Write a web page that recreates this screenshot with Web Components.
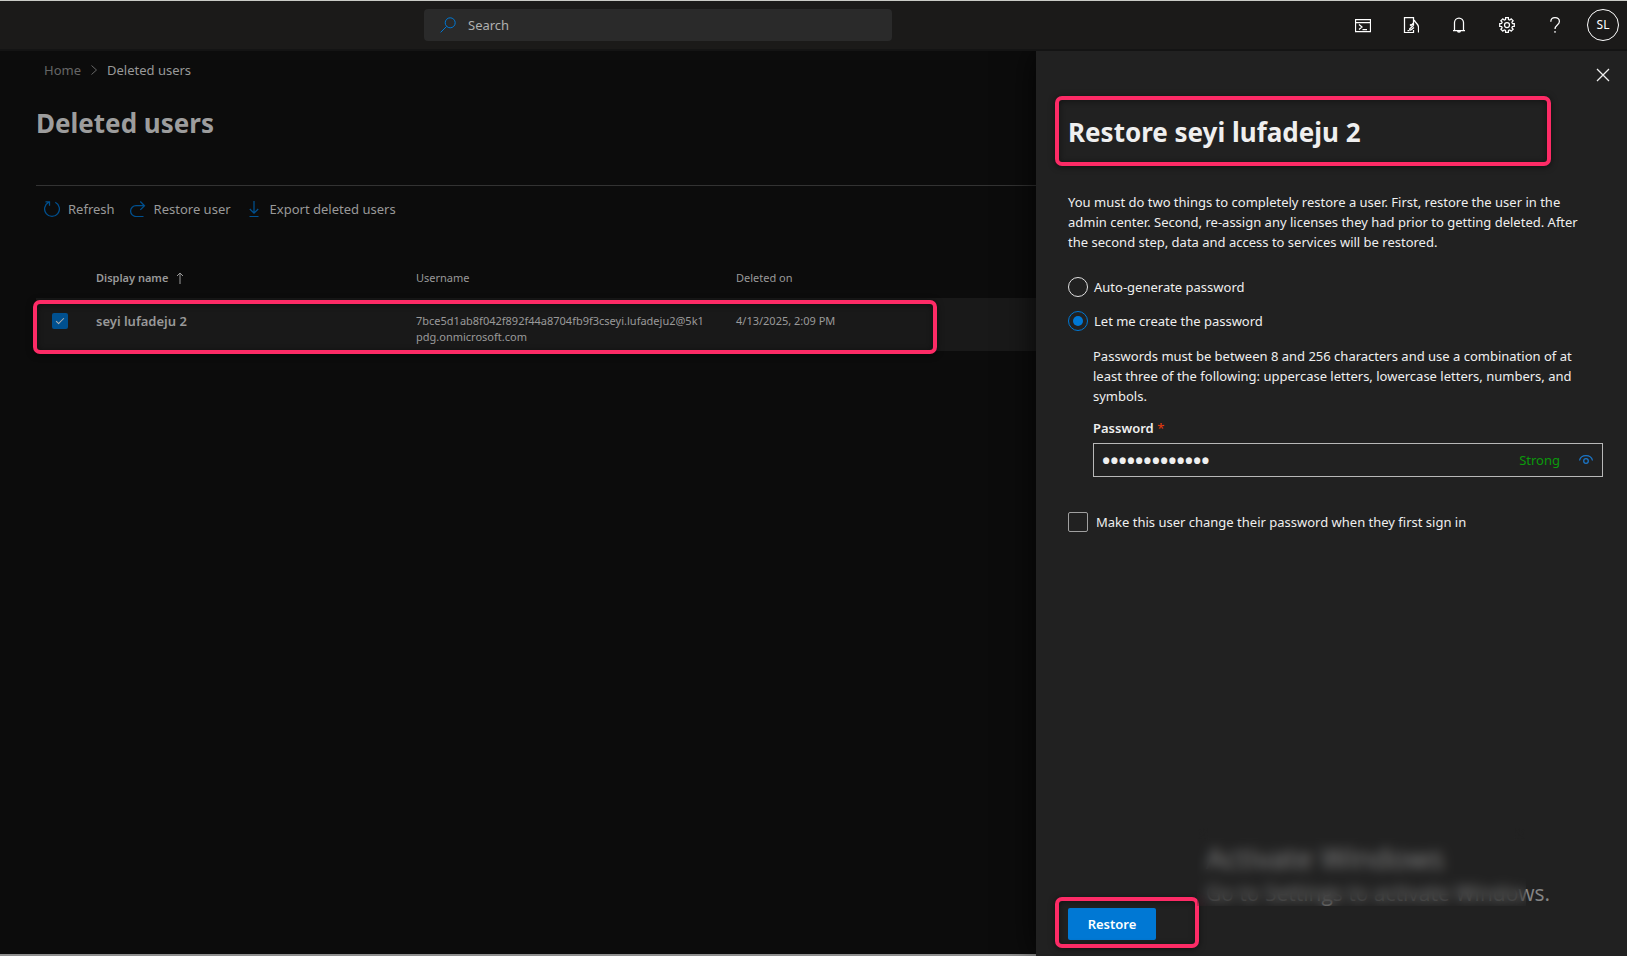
<!DOCTYPE html>
<html lang="en">
<head>
<meta charset="utf-8">
<title>Deleted users</title>
<style>
html, body { margin: 0; height: 100%; background: #0c0c0c; }
body { font: 13px/20px "Noto Sans", "Open Sans", sans-serif; color: #efefef; }
</style>
</head>
<body>
<admin-shell>
  <admin-header slot="header"></admin-header>
  <users-page slot="main"></users-page>
  <restore-panel slot="panel"></restore-panel>
</admin-shell>

<script>
function define(name, markup, setup) {
  const template = document.createElement('template');
  template.innerHTML = markup;
  customElements.define(name, class extends HTMLElement {
    constructor() {
      super();
      this.attachShadow({ mode: 'open' }).append(template.content.cloneNode(true));
    }
    connectedCallback() { if (setup) setup(this, this.shadowRoot); }
  });
}

const gear = (() => {
  const p = [];
  const at = (r, a) => p.push((8 + r * Math.cos(a)).toFixed(2) + ' ' + (8 + r * Math.sin(a)).toFixed(2));
  for (let i = 0; i < 8; i++) {
    const a = i * Math.PI / 4;
    at(5.6, a - .27); at(7.4, a - .19); at(7.4, a + .19); at(5.6, a + .27);
  }
  return 'M' + p.join('L') + 'Z';
})();

const icons = {
  search: '<circle cx="10.2" cy="5.8" r="5"/><path d="M6.6 9.4 .6 15.4"/>',
  shell: '<path d="M.5 2.5h15v12H.5zM.5 5.5h15M4 7.5l3 2.5-3 2.5M7.5 12.5H12"/>',
  touch: '<path d="M10.500 4V.500h-9v15h9V13M4.500 13.500h2"/><path d="M10.500 8.500V4.200c0-1 1.300-1 1.300 0l2.700 3.300c.8 1 1 1.500 1 3v5M10.500 6 8 8.500l-1-1M10.500 8.500l-3.500 3c-.8.800.2 2 1.200 1.200l2.800-2.200"/>',
  bell: '<path d="M3.500 13V5.500a4.500 4.500 0 0 1 9 0V13M2 13.500h12M6.500 13.500a1.500 1.700 0 0 0 3 0"/>',
  gear: '<path d="' + gear + '"/><circle cx="8" cy="8" r="2.500"/>',
  help: '<path d="M3.800 4.800C3.800 2.200 5.500.700 8 .700s4.400 1.500 4.400 3.900c0 3.400-4.400 3.500-4.400 7.400"/><path d="M8 14v1.800"/>',
  close: '<path d="M2 2l12 12M14 2 2 14"/>',
  chevron: '<path d="M5.500 3.500 10.500 8l-5 4.500"/>',
  refresh: '<path d="M4.700 1.300A7.400 7.400 0 1 0 11.300 1.300M1.500.800h4v4"/>',
  redo: '<path d="M13.500 15.500H6A5.300 5.300 0 0 1 6 4.700h8.500M10.300.500l4.200 4.200-4.200 4.200"/>',
  download: '<path d="M8 0v12M3.800 8 8 12.200 12.200 8M3.500 15.500h9"/>',
  up: '<path d="M8 14V3M5 6l3-3 3 3"/>',
  eye: '<path d="M1.500 8.500C2.200 5 5 3.500 8 3.500s5.800 1.500 6.500 5"/><circle cx="8" cy="9" r="2.300"/>'
};
define('ui-icon', `
  <style>
    :host { display: inline-block; flex: none; width: 16px; height: 16px; }
    svg { display: block; width: 100%; height: 100%; fill: none; stroke: currentColor; stroke-width: var(--icon-stroke, 1); }
  </style>
  <svg viewBox="0 0 16 16" aria-hidden="true"></svg>`,
  (host, root) => { root.querySelector('svg').innerHTML = icons[host.getAttribute('name')]; });

define('marked-area', `
  <style>
    :host { display: block; position: relative; }
    .frame {
      position: absolute; inset: var(--mark-inset, 0); pointer-events: none;
      border: 4px solid #fd2b66; border-radius: 7px;
      box-shadow: 0 1px 6px rgba(0,0,0,.55), inset 0 1px 6px rgba(0,0,0,.45);
    }
  </style>
  <slot></slot><div class="frame"></div>`);

define('admin-shell', `
  <style>
    :host { display: flex; flex-direction: column; min-height: 100vh; }
    .body { flex: 1; display: flex; align-items: stretch; }
    .main { flex: 1; min-width: 0; display: flex; flex-direction: column; border-bottom: 2px solid #8f8f8f; }
    .panel { flex: 0 1 591px; display: flex; position: relative; box-shadow: 0 0 32px rgba(0,0,0,.8); }
    ::slotted(*) { flex: 1; }
    ::slotted([slot=header]) { flex: none; }
  </style>
  <slot name="header"></slot>
  <div class="body">
    <div class="main"><slot name="main"></slot></div>
    <div class="panel"><slot name="panel"></slot></div>
  </div>`);

define('admin-header', `
  <style>
    :host {
      display: flex; align-items: center; height: 48px; position: relative; z-index: 1;
      background: #1b1a19; border-top: 1px solid #cacbc6; border-bottom: 2px solid #141414;
    }
    .lead { flex: 0 1 424px; }
    .search {
      flex: 0 1 468px; height: 32px; display: flex; align-items: center; gap: 12px;
      box-sizing: border-box; padding: 0 16px; border-radius: 4px; background: #2a2a2a; color: #0078d4;
    }
    input {
      flex: 1; min-width: 0; padding: 0; border: 0; outline: 0; background: none; font: inherit; color: #b0b0b0;
    }
    input::placeholder { color: #b0b0b0; opacity: 1; }
    nav { margin-left: auto; display: flex; }
    button {
      width: 48px; height: 48px; padding: 0; border: 0; background: none; color: #fff;
      font: inherit; display: grid; place-items: center;
    }
    nav ui-icon { --icon-stroke: 1.25; }
    .avatar {
      box-sizing: border-box; width: 32px; height: 32px; border: 1px solid #fff; border-radius: 50%;
      display: grid; place-items: center; font-size: 12px;
    }
  </style>
  <div class="lead"></div>
  <label class="search"><ui-icon name="search"></ui-icon><input type="search" placeholder="Search" aria-label="Search"></label>
  <nav aria-label="Tools">
    <button aria-label="Cloud shell"><ui-icon name="shell"></ui-icon></button>
    <button aria-label="Mobile app"><ui-icon name="touch"></ui-icon></button>
    <button aria-label="Notifications"><ui-icon name="bell"></ui-icon></button>
    <button aria-label="Settings"><ui-icon name="gear"></ui-icon></button>
    <button aria-label="Help"><ui-icon name="help"></ui-icon></button>
    <button aria-label="Account"><span class="avatar">SL</span></button>
  </nav>`);

define('bread-crumb', `
  <style>
    :host { display: block; padding-left: 8px; color: #999; }
    nav { display: flex; align-items: center; gap: 5px; }
    a { color: #666; text-decoration: none; }
    ui-icon { color: #666; }
  </style>
  <nav aria-label="Breadcrumb"><a href="#home">Home</a><ui-icon name="chevron"></ui-icon><span aria-current="page">Deleted users</span></nav>`);

define('command-button', `
  <style>
    :host { display: block; }
    button {
      height: 36px; padding: 0; border: 0; background: none; font: inherit; color: #999;
      display: flex; align-items: center; gap: 8px;
    }
    ui-icon { color: #00508f; --icon-stroke: 1.25; }
  </style>
  <button><ui-icon></ui-icon><slot></slot></button>`,
  (host, root) => {
    const icon = document.createElement('ui-icon');
    icon.setAttribute('name', host.getAttribute('icon'));
    root.querySelector('ui-icon').replaceWith(icon);
  });

define('users-table', `
  <style>
    :host { display: block; font-size: 11px; line-height: 16px; color: #999; }
    table { width: 100%; border-collapse: collapse; table-layout: fixed; }
    th, td { padding: 0; text-align: left; font-weight: 400; }
    thead th { height: 40px; }
    .check { width: 60px; }
    .wide { width: 320px; }
    .sorted { font-weight: 600; }
    .sorted span { display: flex; align-items: center; gap: 4px; }
    tbody tr { background: #191919; }
    tbody td, tbody th { height: 38px; padding-top: 15px; vertical-align: top; }
    tbody th { font-size: 13px; font-weight: 600; }
    tbody td.user { padding-right: 30px; overflow-wrap: anywhere; }
    input {
      appearance: none; display: block; width: 16px; height: 16px; margin: 0 0 0 16px; border-radius: 2px;
      background: #00508f; position: relative;
    }
    input::after {
      content: ""; position: absolute; left: 4px; top: 5px; width: 7px; height: 3px;
      border: solid #b0b0b0; border-width: 0 0 1px 1px; transform: rotate(-45deg);
    }
  </style>
  <table>
    <thead><tr>
      <th class="check"></th>
      <th class="wide sorted" aria-sort="ascending"><span>Display name<ui-icon name="up"></ui-icon></span></th>
      <th class="wide">Username</th>
      <th>Deleted on</th>
    </tr></thead>
    <tbody><tr>
      <td><input type="checkbox" checked aria-label="Select seyi lufadeju 2"></td>
      <th>seyi lufadeju 2</th>
      <td class="user">7bce5d1ab8f042f892f44a8704fb9f3cseyi.lufadeju2@5k1pdg.onmicrosoft.com</td>
      <td>4/13/2025, 2:09 PM</td>
    </tr></tbody>
  </table>`);

define('users-page', `
  <style>
    :host { display: block; padding: 9px 0 0 36px; }
    h1 { margin: 25px 0 44px; font-size: 26px; line-height: 36px; font-weight: 700; color: #9d9d9d; }
    .commands { display: flex; gap: 15px; padding: 5px 0 0 8px; margin-bottom: 31px; border-top: 1px solid #333; }
    marked-area { --mark-inset: 42px 99px -3px -3px; }
  </style>
  <bread-crumb></bread-crumb>
  <h1>Deleted users</h1>
  <div class="commands">
    <command-button icon="refresh">Refresh</command-button>
    <command-button icon="redo">Restore user</command-button>
    <command-button icon="download">Export deleted users</command-button>
  </div>
  <marked-area><users-table></users-table></marked-area>`);

define('windows-watermark', `
  <style>
    :host { display: block; position: relative; font-family: "Open Sans", sans-serif; color: #858585; white-space: nowrap; }
    p { margin: 0; font-size: 21px; line-height: 30px; }
    .title { font-size: 29px; line-height: 40px; }
    .blur { position: absolute; inset: -10px 24px 2px -9px; backdrop-filter: blur(6px); }
  </style>
  <p class="title">Activate Windows</p>
  <p>Go to Settings to activate Windows.</p>
  <div class="blur"></div>`);

define('restore-panel', `
  <style>
    :host { display: flex; flex-direction: column; min-width: 0; position: relative; background: #212121; }
    .close {
      align-self: flex-end; width: 48px; height: 48px; padding: 0; border: 0; background: none; color: #efefef;
      display: grid; place-items: center; --icon-stroke: 1.25;
    }
    .content { padding: 15px 24px 0 32px; }
    .heading { --mark-inset: -18px 52px -16px -13px; }
    h2 { margin: 0; font-size: 26px; line-height: 36px; font-weight: 700; }
    p { margin: 0; }
    .intro { margin-top: 42px; max-width: 526px; }
    fieldset { margin: 25px 0 0; padding: 0; border: 0; display: grid; gap: 14px; }
    .option { display: flex; align-items: center; gap: 6px; }
    .option input { appearance: none; box-sizing: border-box; flex: none; width: 20px; height: 20px; margin: 0; border: 1px solid #e0e0e0; }
    .option [type=radio] { border-radius: 50%; display: grid; place-items: center; }
    .option [type=radio]:checked { border-color: #0078d4; }
    .option [type=radio]:checked::before { content: ""; width: 10px; height: 10px; border-radius: 50%; background: #0078d4; }
    .option [type=checkbox] { border-color: #a0a0a0; border-radius: 2px; }
    .details { margin: 15px 0 0 25px; }
    .name { display: block; margin: 12px 0 5px; font-weight: 600; }
    .name span { color: #e83a0c; font-weight: 400; }
    .field { box-sizing: border-box; height: 34px; display: flex; align-items: center; border: 1px solid #b8b8b8; padding: 0 8px; }
    .field input {
      flex: 1; min-width: 0; height: 32px; padding: 0; border: 0; outline: 0; background: none;
      color: #efefef; font: 700 22px/32px "Noto Sans", sans-serif;
    }
    .strength { color: #0b9a0b; }
    .reveal { margin-left: 18px; padding: 0; border: 0; background: none; color: #1b76c8; display: grid; --icon-stroke: 1.25; }
    .change { margin-top: 35px; gap: 8px; }
    footer { margin-top: auto; padding: 0 0 16px 32px; display: flex; align-items: flex-end; }
    .primary {
      display: block; width: 88px; height: 32px; padding: 0; border: 0; border-radius: 2px;
      background: #0078d4; color: #fff; font: inherit; font-weight: 600;
    }
    footer marked-area { --mark-inset: -11px -43px -8px -13px; }
    windows-watermark { position: absolute; left: 170px; bottom: 48px; }
  </style>
  <button class="close" aria-label="Close"><ui-icon name="close"></ui-icon></button>
  <div class="content">
    <marked-area class="heading"><h2>Restore seyi lufadeju 2</h2></marked-area>
    <p class="intro">You must do two things to completely restore a user. First, restore the user in the admin center. Second, re-assign any licenses they had prior to getting deleted. After the second step, data and access to services will be restored.</p>
    <fieldset aria-label="Password option">
      <label class="option"><input type="radio" name="mode">Auto-generate password</label>
      <label class="option"><input type="radio" name="mode" checked>Let me create the password</label>
    </fieldset>
    <div class="details">
      <p>Passwords must be between 8 and 256 characters and use a combination of at least three of the following: uppercase letters, lowercase letters, numbers, and symbols.</p>
      <label class="name" for="password">Password <span>*</span></label>
      <div class="field">
        <input id="password" type="password" value="aaaaaaaaaaaaa" required>
        <span class="strength">Strong</span>
        <button class="reveal" aria-label="Show password"><ui-icon name="eye"></ui-icon></button>
      </div>
    </div>
    <label class="option change"><input type="checkbox">Make this user change their password when they first sign in</label>
  </div>
  <footer>
    <marked-area><button class="primary">Restore</button></marked-area>
  </footer>
  <windows-watermark></windows-watermark>`);
</script>
</body>
</html>
